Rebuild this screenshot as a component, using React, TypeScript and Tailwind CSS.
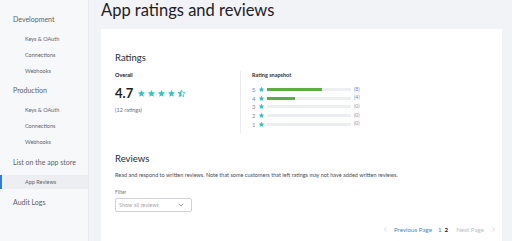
import { ChevronDown, ChevronLeft, ChevronRight } from "lucide-react";

const font = { fontFamily: "Lato, 'Open Sans', sans-serif" };

function Star({ size = 9, half = false }: { size?: number; half?: boolean }) {
  const d =
    "M12 2.5l2.9 6.2 6.6.8-4.9 4.6 1.3 6.6L12 17.4l-5.9 3.3 1.3-6.6-4.9-4.6 6.6-.8z";
  return (
    <svg width={size} height={size} viewBox="0 0 24 24">
      {half ? (
        <>
          <defs>
            <clipPath id="h">
              <rect x="0" y="0" width="12" height="24" />
            </clipPath>
          </defs>
          <path d={d} fill="none" stroke="#3fbfbf" strokeWidth="2" />
          <path d={d} fill="#3fbfbf" clipPath="url(#h)" />
        </>
      ) : (
        <path d={d} fill="#3fbfbf" />
      )}
    </svg>
  );
}

const snapshot = [
  { n: 5, pct: 66, count: 8 },
  { n: 4, pct: 33, count: 4 },
  { n: 3, pct: 0, count: 0 },
  { n: 2, pct: 0, count: 0 },
  { n: 1, pct: 0, count: 0 },
];

function NavGroup({ title, items }: { title: string; items: string[] }) {
  return (
    <div>
      <div className="pl-[13px] h-[20px] flex items-center text-[7px] text-[#5d636b]">{title}</div>
      <div className="mt-[2px]">
        {items.map((i) => (
          <div key={i} className="pl-[25px] h-[16px] flex items-center text-[5.5px] text-[#5d636b]">
            {i}
          </div>
        ))}
      </div>
    </div>
  );
}

export default function App() {
  return (
    <div className="flex w-[512px] h-[241px] overflow-hidden bg-[#f2f3f7]" style={font}>
      {/* sidebar */}
      <aside className="w-[89px] shrink-0 bg-[#f7f8fa] border-r border-[#e8e9ee] pt-[9px]">
        <NavGroup title="Development" items={["Keys & OAuth", "Connections", "Webhooks"]} />
        <div className="h-[1px]" />
        <NavGroup title="Production" items={["Keys & OAuth", "Connections", "Webhooks"]} />
        <div className="h-[2px]" />
        <div className="pl-[13px] h-[20px] flex items-center text-[7px] text-[#5d636b]">
          List on the app store
        </div>
        <div className="relative mt-[3px] h-[14px] flex items-center pl-[25px] bg-[#eceef2] text-[5.5px] text-[#5d636b]">
          <span className="absolute left-0 top-0 h-full w-[2px] bg-[#2b7fd3]" />
          App Reviews
        </div>
        <div className="pl-[13px] h-[26px] flex items-center text-[7px] text-[#5d636b]">Audit Logs</div>
      </aside>

      {/* main */}
      <main className="flex-1 pl-[12px] pr-[10px]">
        <h1 className="h-[27px] flex items-center text-[16.5px] text-[#1f2023] leading-none -mt-[3px] mb-[5px]">
          App ratings and reviews
        </h1>
        <div className="bg-white h-[220px] pl-[14px] pr-[14px] pt-[22px]">
          <div className="text-[9.5px] text-[#2a2b2e] h-[15px] flex items-center">Ratings</div>
          <div className="flex mt-[5px]">
            <div className="w-[126px] border-r border-[#ececef] h-[62px]">
              <div className="text-[5.5px] font-bold text-[#222] h-[8px] flex items-center">Overall</div>
              <div className="flex items-center gap-[3px] mt-[8px]">
                <span className="text-[13px] font-bold text-[#1e1f22] leading-none">4.7</span>
                <div className="flex gap-[1px] ml-[1px]">
                  <Star size={9} />
                  <Star size={9} />
                  <Star size={9} />
                  <Star size={9} />
                  <Star size={9} half />
                </div>
              </div>
              <div className="text-[5.5px] text-[#6b6f76] mt-[6px]">(12 ratings)</div>
            </div>
            <div className="pl-[11px]">
              <div className="text-[5.5px] font-bold text-[#333] h-[8px] flex items-center">Rating snapshot</div>
              <div className="mt-[6px] flex flex-col">
                {snapshot.map((r) => (
                  <div key={r.n} className="flex items-center h-[8.7px]">
                    <span
                      className={`w-[6px] text-[6px] ${r.count ? "text-[#5a8fd0]" : "text-[#8d9096]"}`}
                    >
                      {r.n}
                    </span>
                    <Star size={7} />
                    <div className="ml-[2px] w-[84px] h-[3px] bg-[#eceef1]">
                      <div className="h-full bg-[#5eac46]" style={{ width: `${r.pct}%` }} />
                    </div>
                    <span
                      className={`ml-[3px] text-[5px] ${r.count ? "text-[#5a8fd0]" : "text-[#8d9096]"}`}
                    >
                      ({r.count})
                    </span>
                  </div>
                ))}
              </div>
            </div>
          </div>

          <div className="text-[9.5px] text-[#2a2b2e] mt-[19px] h-[15px] flex items-center">Reviews</div>
          <div className="text-[5.5px] text-[#4a4d52] mt-[4px]">
            Read and respond to written reviews. Note that some customers that left ratings may not have added written reviews.
          </div>
          <div className="text-[5px] text-[#7a7e84] mt-[10px]">Filter</div>
          <div className="mt-[1px] w-[77px] h-[14px] border border-[#cfd2d6] rounded-[2px] flex items-center justify-between px-[3px] text-[5.5px] text-[#a3a6ab]">
            Show all reviews
            <ChevronDown size={8} strokeWidth={2} className="text-[#6c7077] mr-[3px]" />
          </div>

          <div className="flex justify-end items-center gap-[3px] mt-[13px] -mr-[9px] text-[6.2px]">
            <ChevronLeft size={7} className="text-[#b9bcc1]" />
            <span className="text-[#4f86c6] ml-[2px]">Previous Page</span>
            <span className="text-[#4f86c6] ml-[3px]">1</span>
            <span className="text-[#222] font-bold">2</span>
            <span className="text-[#b9bcc1] ml-[5px]">Next Page</span>
            <ChevronRight size={7} className="text-[#b9bcc1] ml-[3px]" />
          </div>
        </div>
      </main>
    </div>
  );
}
